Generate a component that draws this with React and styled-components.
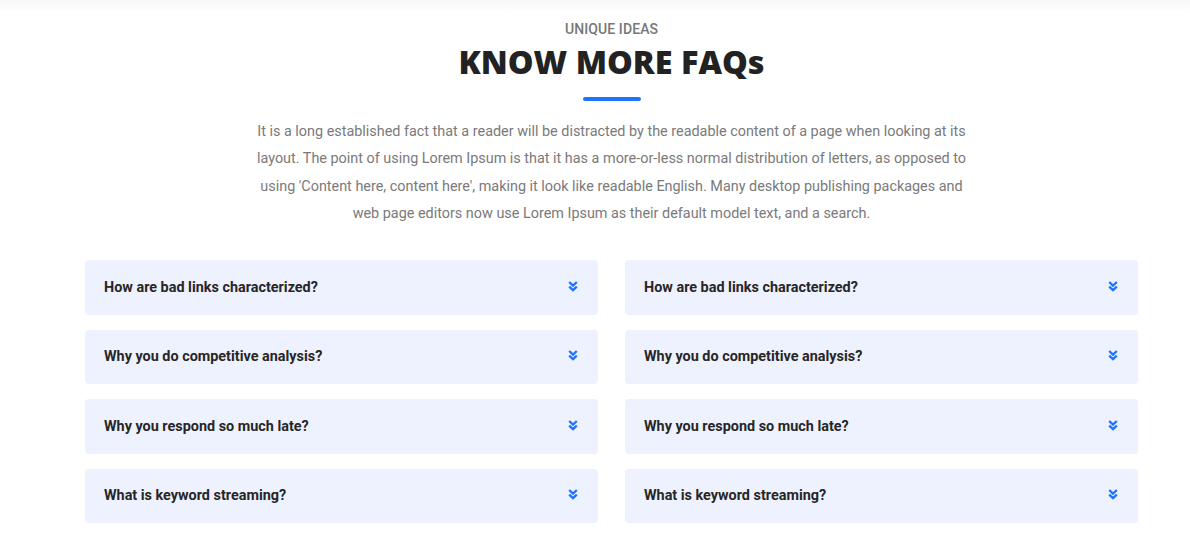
import styled, { createGlobalStyle } from "styled-components";

const GlobalStyle = createGlobalStyle`
  * { box-sizing: border-box; }
  body {
    margin: 0;
    background: #fff;
    font-family: Roboto, "Liberation Sans", sans-serif;
  }
`;

const Section = styled.section`
  background: linear-gradient(#f7f7f7 0, #fff 12px);
  padding: 21px 0 10px;
`;

const Container = styled.div`
  width: 1053px;
  margin-left: 85px;
`;

const Head = styled.header`
  display: flex;
  flex-direction: column;
  align-items: center;
  text-align: center;
  margin-bottom: 33px;
  .sub {
    font-size: 14px;
    font-weight: 500;
    color: #777;
    letter-spacing: 0.1px;
    margin: 0;
    line-height: 16px;
  }
  h2 {
    font-family: "Open Sans", sans-serif;
    font-weight: 800;
    font-size: 32.4px;
    color: #222;
    margin: 2px 0 0;
    line-height: 44px;
  }
  .bar {
    width: 58px;
    height: 4px;
    background: #1f74ff;
    border-radius: 2px;
    margin-top: 14px;
  }
  p {
    max-width: 730px;
    margin: 17px 0 0;
    font-size: 14.4px;
    line-height: 27.3px;
    color: #7a7a7a;
  }
`;

const Grid = styled.div`
  display: grid;
  grid-template-columns: 1fr 1fr;
  column-gap: 27px;
  row-gap: 15px;
`;

const Question = styled.button`
  display: flex;
  align-items: center;
  justify-content: space-between;
  height: 54.5px;
  padding: 0 20px 0 19px;
  background: #eef2fe;
  border: none;
  border-radius: 4px;
  font-family: Roboto, "Liberation Sans", sans-serif;
  font-size: 14.4px;
  font-weight: 700;
  color: #262626;
  text-align: left;
  cursor: pointer;
  svg {
    width: 10px;
    height: 11px;
    margin-top: -2px;
  }
`;

const Chevrons = () => (
  <svg viewBox="0 0 10 11" fill="none" stroke="#1f74ff" strokeWidth="2.3" strokeLinejoin="miter">
    <polyline points="1.2,1 5,4.6 8.8,1" />
    <polyline points="1.2,5.6 5,9.2 8.8,5.6" />
  </svg>
);

const questions = [
  "How are bad links characterized?",
  "Why you do competitive analysis?",
  "Why you respond so much late?",
  "What is keyword streaming?",
];

export default function App() {
  const items = questions.flatMap((q) => [q, q]);
  return (
    <>
      <GlobalStyle />
      <Section>
        <Container>
          <Head>
            <span className="sub">UNIQUE IDEAS</span>
            <h2>KNOW MORE FAQs</h2>
            <div className="bar" />
            <p>
              It is a long established fact that a reader will be distracted by the readable content of a page when
              looking at its layout. The point of using Lorem Ipsum is that it has a more-or-less normal distribution of
              letters, as opposed to using 'Content here, content here', making it look like readable English. Many
              desktop publishing packages and web page editors now use Lorem Ipsum as their default model text, and a
              search.
            </p>
          </Head>
          <Grid>
            {items.map((q, i) => (
              <Question key={i} type="button">
                {q}
                <Chevrons />
              </Question>
            ))}
          </Grid>
        </Container>
      </Section>
    </>
  );
}
